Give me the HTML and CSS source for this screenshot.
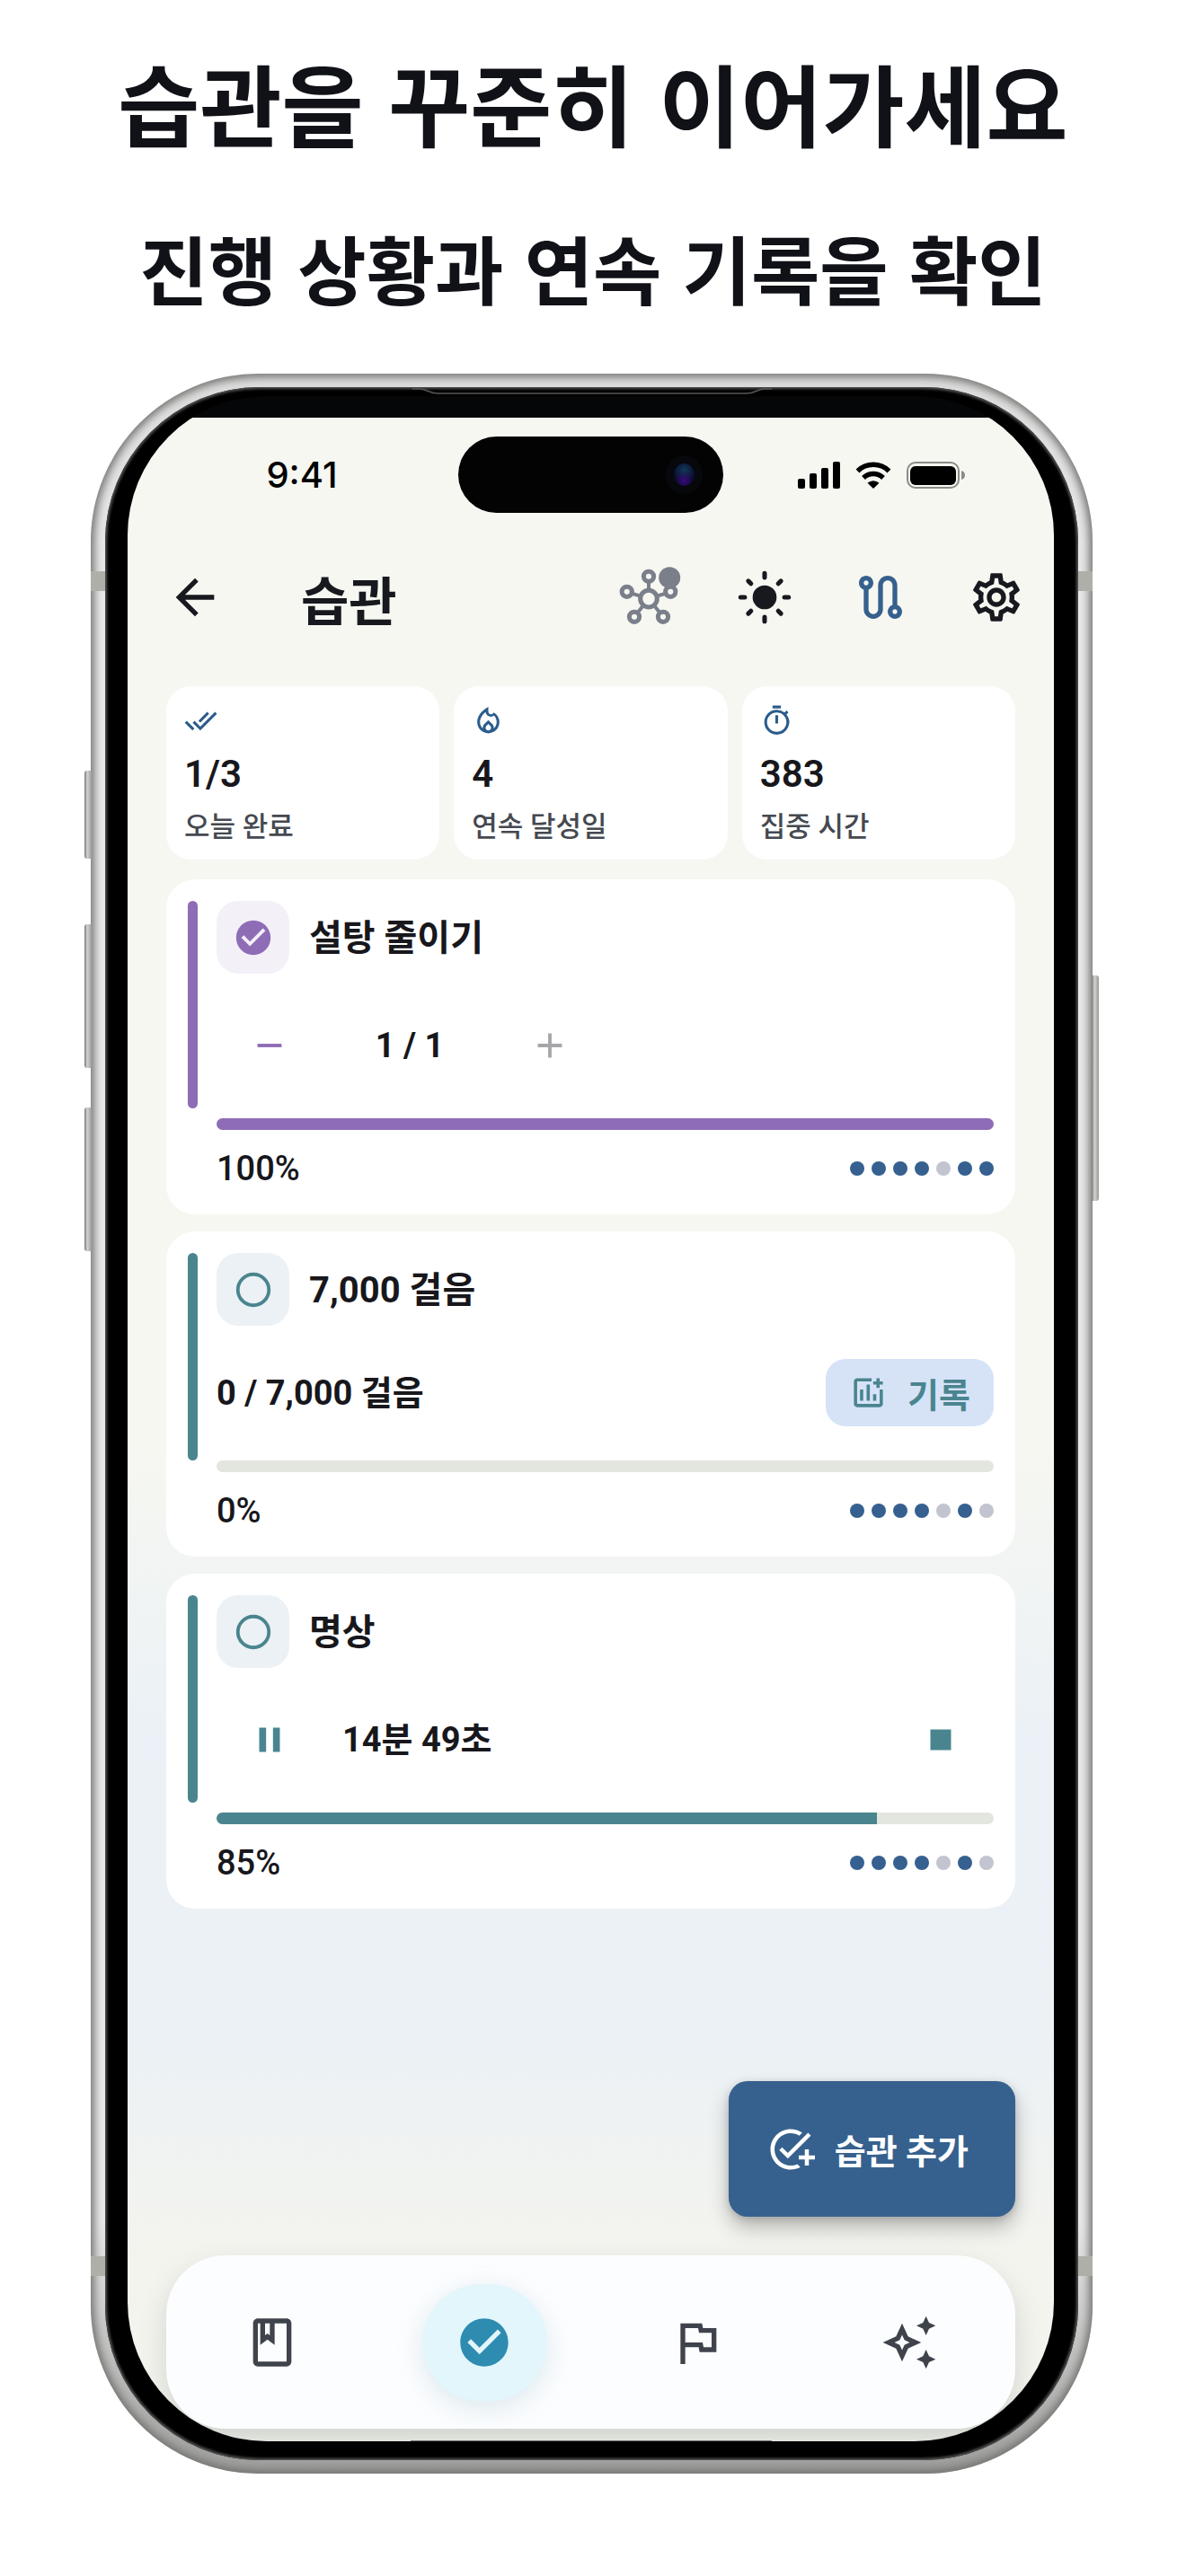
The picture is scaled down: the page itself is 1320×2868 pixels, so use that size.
FILE: index.html
```html
<!DOCTYPE html>
<html lang="ko">
<head>
    <meta charset="utf-8">
    <meta name="viewport" content="width=device-width, initial-scale=1">
    <title>습관</title>
    <link rel="stylesheet" href="styles.css">
</head>
<body>
    <header class="intro">
        <h1>습관을 꾸준히 이어가세요</h1>
        <h2>진행 상황과 연속 기록을 확인</h2>
    </header>

    <div class="phone">
        <span class="key key-action"></span>
        <span class="key key-up"></span>
        <span class="key key-down"></span>
        <span class="key key-power"></span>
        <span class="band band-top"></span>
        <span class="band band-bottom"></span>
        <div class="bezel">
            <svg class="speaker" viewBox="0 0 400 10" aria-hidden="true"><path d="M0 2h8c8 0 10 5 20 5h344c10 0 12-5 20-5h8" fill="none" stroke="#555" stroke-width="1.5"/></svg>
            <div class="glass">
                <main class="screen">
                    <div class="status">
                        <span class="time">9:41</span>
                        <div class="island"><span class="camera"></span></div>
                        <div class="status-icons">
                            <svg width="47" height="30" viewBox="0 0 47 30" aria-hidden="true"><rect x="0" y="19" width="8" height="11" rx="2"/><rect x="13" y="13" width="8" height="17" rx="2"/><rect x="26" y="7" width="8" height="23" rx="2"/><rect x="39" y="0" width="8" height="30" rx="2"/></svg>
                            <svg width="40" height="30" viewBox="0 0 40 30" aria-hidden="true"><path d="M2.500 10.500a25 25 0 0 1 35 0M9 18a16 16 0 0 1 22 0" fill="none" stroke="#000" stroke-width="5.500"/><path d="M20 30l-6.500-6.200a9.500 9.500 0 0 1 13 0z"/></svg>
                            <svg width="65" height="30" viewBox="0 0 65 30" aria-hidden="true"><rect x="1" y="1" width="57" height="28" rx="9" fill="none" stroke="#8b8c88" stroke-width="2"/><rect x="4" y="5" width="51" height="21" rx="6"/><path d="M61 10q4 1 4 5t-4 5z" fill="#8b8c88"/></svg>
                        </div>
                    </div>

                    <div class="appbar">
                        <button class="icon-btn back" aria-label="뒤로"><svg class="icon" viewBox="0 0 24 24"><path d="M20 11H7.830l5.590-5.590L12 4l-8 8 8 8 1.410-1.410L7.830 13H20v-2z"/></svg></button>
                        <h3>습관</h3>
                        <button class="icon-btn hub" aria-label="연결">
                            <svg class="icon" viewBox="0 0 24 24"><g fill="none" stroke="currentColor" stroke-width="1.900"><circle cx="12" cy="12.600" r="3.500"/><circle cx="12" cy="3.300" r="2.100"/><circle cx="2.900" cy="9.700" r="2.100"/><circle cx="21.100" cy="9.700" r="2.100"/><circle cx="6" cy="20.200" r="2.100"/><circle cx="18" cy="20.200" r="2.100"/><path stroke-width="1.500" d="M12 5.400v3.700M4.900 10.400l3.700 1.100M19.100 10.400l-3.700 1.100M7.300 18.500l2.500-3.100M16.700 18.500l-2.500-3.100"/></g><circle cx="20.700" cy="3.800" r="4.500"/></svg>
                        </button>
                        <button class="icon-btn" aria-label="밝은 테마"><svg class="icon" viewBox="0 0 24 24"><circle cx="12" cy="12" r="5"/><path fill="none" stroke="currentColor" stroke-width="1.900" stroke-linecap="round" d="M12 2v1.700M12 20.300V22M2 12h1.700M20.300 12H22M5.200 5.200l1.100 1.100M17.700 17.700l1.100 1.100M5.200 18.800l1.100-1.100M17.700 6.300l1.100-1.100"/></svg></button>
                        <button class="icon-btn route" aria-label="경로"><svg class="icon" viewBox="0 0 24 24"><path d="M19 15.180V7c0-2.210-1.790-4-4-4s-4 1.790-4 4v10c0 1.100-.9 2-2 2s-2-.9-2-2V8.820C8.160 8.400 9 7.300 9 6c0-1.660-1.340-3-3-3S3 4.340 3 6c0 1.300.84 2.400 2 2.820V17c0 2.210 1.790 4 4 4s4-1.790 4-4V7c0-1.100.9-2 2-2s2 .9 2 2v8.180A2.996 2.996 0 0 0 18 21c1.660 0 3-1.340 3-3 0-1.300-.84-2.400-2-2.820zM6 7c-.55 0-1-.45-1-1s.45-1 1-1 1 .45 1 1-.45 1-1 1zm12 12c-.55 0-1-.45-1-1s.45-1 1-1 1 .45 1 1-.45 1-1 1z"/></svg></button>
                        <button class="icon-btn" aria-label="설정"><svg class="icon" viewBox="0 0 24 24"><path d="M19.430 12.980c.04-.32.07-.64.07-.98 0-.34-.03-.66-.07-.98l2.110-1.650c.19-.15.24-.42.12-.64l-2-3.460c-.09-.16-.26-.25-.44-.25-.06 0-.12.01-.17.03l-2.490 1c-.52-.4-1.080-.73-1.690-.98l-.38-2.650C14.460 2.180 14.250 2 14 2h-4c-.25 0-.46.18-.49.42l-.38 2.650c-.61.25-1.170.59-1.690.98l-2.490-1c-.06-.02-.12-.03-.18-.03-.17 0-.34.09-.43.25l-2 3.460c-.13.22-.07.49.12.64l2.110 1.650c-.04.32-.07.65-.07.98 0 .33.03.66.07.98l-2.110 1.650c-.19.15-.24.42-.12.64l2 3.460c.09.16.26.25.44.25.06 0 .12-.01.17-.03l2.490-1c.52.4 1.080.73 1.690.98l.38 2.650c.03.24.24.42.49.42h4c.25 0 .46-.18.49-.42l.38-2.650c.61-.25 1.170-.59 1.690-.98l2.490 1c.06.02.12.03.18.03.17 0 .34-.09.43-.25l2-3.460c.12-.22.07-.49-.12-.64l-2.110-1.650zm-1.980-1.710c.04.31.05.52.05.73 0 .21-.02.43-.05.73l-.14 1.130.89.7 1.080.84-.7 1.210-1.270-.51-1.040-.42-.9.68c-.43.32-.84.56-1.250.73l-1.060.43-.16 1.130-.2 1.350h-1.400l-.19-1.350-.16-1.130-1.060-.43c-.43-.18-.83-.41-1.230-.71l-.91-.7-1.060.43-1.270.51-.7-1.210 1.080-.84.89-.7-.14-1.130c-.03-.31-.05-.54-.05-.74s.02-.43.05-.73l.14-1.130-.89-.7-1.080-.84.7-1.210 1.270.51 1.040.42.9-.68c.43-.32.84-.56 1.250-.73l1.060-.43.16-1.130.2-1.350h1.390l.19 1.350.16 1.130 1.060.43c.43.18.83.41 1.230.71l.91.7 1.060-.43 1.270-.51.7 1.210-1.070.85-.89.7.14 1.130zM12 8c-2.210 0-4 1.790-4 4s1.790 4 4 4 4-1.790 4-4-1.790-4-4-4zm0 6c-1.100 0-2-.9-2-2s.9-2 2-2 2 .9 2 2-.9 2-2 2z"/></svg></button>
                    </div>

                    <section class="stats">
                        <div class="stat">
                            <svg class="icon-sm" viewBox="0 0 24 24"><path d="M18 7l-1.410-1.410-6.340 6.340 1.410 1.410L18 7zm4.240-1.410L11.660 16.170 7.480 12l-1.410 1.410L11.660 19l12-12-1.420-1.410zM.41 13.410L6 19l1.410-1.410L1.830 12 .41 13.410z"/></svg>
                            <strong>1/3</strong>
                            <span>오늘 완료</span>
                        </div>
                        <div class="stat">
                            <svg class="icon-sm" viewBox="0 0 24 24"><path d="M16 6l-.44.55C14.380 8.020 12 7.190 12 5.300V2S4 6 4 13c0 4.420 3.580 8 8 8s8-3.580 8-8c0-2.960-1.610-5.620-4-7zm-4 13c-1.100 0-2-.87-2-1.940 0-.51.2-.99.58-1.360L12 14.300l1.430 1.400c.37.37.57.85.57 1.360 0 1.070-.9 1.940-2 1.940zm3.960-1.500c.04-.36.22-1.840-1.130-3.200L12 11.500l-2.830 2.780c-1.360 1.360-1.170 2.880-1.130 3.210A5.986 5.986 0 0 1 6 13c0-3.160 2.130-5.650 4.030-7.250A4.003 4.003 0 0 0 13.990 9c.78 0 1.540-.23 2.180-.66C17.340 9.580 18 11.260 18 13c0 1.810-.82 3.400-2.040 4.500z"/></svg>
                            <strong>4</strong>
                            <span>연속 달성일</span>
                        </div>
                        <div class="stat">
                            <svg class="icon-sm" viewBox="0 0 24 24"><path d="M9 1h6v2H9zM19.030 7.390l1.420-1.420c-.43-.51-.9-.99-1.410-1.410l-1.420 1.420A8.962 8.962 0 0 0 12 4c-4.970 0-9 4.030-9 9s4.020 9 9 9a8.994 8.994 0 0 0 7.030-14.610zM12 20c-3.870 0-7-3.130-7-7s3.130-7 7-7 7 3.130 7 7-3.130 7-7 7zM11 8h2v6h-2z"/></svg>
                            <strong>383</strong>
                            <span>집중 시간</span>
                        </div>
                    </section>

                    <section class="habits">
                        <article class="habit purple">
                            <span class="accent"></span>
                            <div class="habit-body">
                                <div class="habit-head">
                                    <button class="check" aria-label="완료됨"><svg class="icon-md" viewBox="0 0 24 24"><path d="M12 2C6.480 2 2 6.480 2 12s4.480 10 10 10 10-4.480 10-10S17.520 2 12 2zm-2 15l-5-5 1.410-1.410L10 14.170l7.590-7.590L19 8l-9 9z"/></svg></button>
                                    <h4>설탕 줄이기</h4>
                                </div>
                                <div class="control">
                                    <button class="step" aria-label="빼기"><svg class="icon-md" viewBox="0 0 24 24"><path d="M5 11h14v2H5z"/></svg></button>
                                    <span class="value counter">1 / 1</span>
                                    <button class="step" aria-label="더하기" disabled><svg class="icon-md" viewBox="0 0 24 24"><path d="M19 13h-6v6h-2v-6H5v-2h6V5h2v6h6z"/></svg></button>
                                </div>
                                <div class="bar"><div class="fill" style="width: 100%"></div></div>
                                <div class="habit-foot">
                                    <span>100%</span>
                                    <div class="dots"><i class="on"></i><i class="on"></i><i class="on"></i><i class="on"></i><i></i><i class="on"></i><i class="on"></i></div>
                                </div>
                            </div>
                        </article>

                        <article class="habit teal">
                            <span class="accent"></span>
                            <div class="habit-body">
                                <div class="habit-head">
                                    <button class="check" aria-label="완료 표시"><svg class="icon-md" viewBox="0 0 24 24"><circle cx="12" cy="12" r="9" fill="none" stroke="currentColor" stroke-width="2"/></svg></button>
                                    <h4>7,000 걸음</h4>
                                </div>
                                <div class="control record-row">
                                    <span class="value">0 / 7,000 걸음</span>
                                    <button class="record">
                                        <svg width="43" height="43" viewBox="0 0 24 24"><path d="M14 3H5c-1.100 0-2 .9-2 2v14c0 1.100.9 2 2 2h14c1.100 0 2-.9 2-2v-9h-2v9H5V5h9zM6.800 10h2v7h-2zM10.900 7h2v10h-2zM14.900 13h2v4h-2zM17 3h2v2h2v2h-2v2h-2V7h-2V5h2z"/></svg>
                                        기록
                                    </button>
                                </div>
                                <div class="bar"><div class="fill" style="width: 0%"></div></div>
                                <div class="habit-foot">
                                    <span>0%</span>
                                    <div class="dots"><i class="on"></i><i class="on"></i><i class="on"></i><i class="on"></i><i></i><i class="on"></i><i></i></div>
                                </div>
                            </div>
                        </article>

                        <article class="habit teal">
                            <span class="accent"></span>
                            <div class="habit-body">
                                <div class="habit-head">
                                    <button class="check" aria-label="완료 표시"><svg class="icon-md" viewBox="0 0 24 24"><circle cx="12" cy="12" r="9" fill="none" stroke="currentColor" stroke-width="2"/></svg></button>
                                    <h4>명상</h4>
                                </div>
                                <div class="control">
                                    <button class="step" aria-label="일시정지"><svg class="icon-md" viewBox="0 0 24 24"><path d="M6 5h4v14H6zM14 5h4v14h-4z"/></svg></button>
                                    <span class="value timer">14분 49초</span>
                                    <button class="step" aria-label="정지"><svg class="icon-md" viewBox="0 0 24 24"><path d="M6 6h12v12H6z"/></svg></button>
                                </div>
                                <div class="bar"><div class="fill" style="width: 85%"></div></div>
                                <div class="habit-foot">
                                    <span>85%</span>
                                    <div class="dots"><i class="on"></i><i class="on"></i><i class="on"></i><i class="on"></i><i></i><i class="on"></i><i></i></div>
                                </div>
                            </div>
                        </article>
                    </section>

                    <button class="add">
                        <svg width="54" height="54" viewBox="0 0 24 24"><path d="M22 5.180L10.590 16.600l-4.240-4.240 1.410-1.410 2.830 2.830 10-10L22 5.180zM12 20c-4.410 0-8-3.590-8-8s3.590-8 8-8c1.570 0 3.040.46 4.280 1.250l1.450-1.450A10.020 10.020 0 0 0 12 2C6.480 2 2 6.480 2 12s4.480 10 10 10c1.730 0 3.360-.44 4.780-1.220l-1.500-1.500c-1 .46-2.110.72-3.280.72zm7-5h-3v2h3v3h2v-3h3v-2h-3v-3h-2v3z"/></svg>
                        습관 추가
                    </button>

                    <nav class="tabs">
                        <a href="#journal" aria-label="기록장"><svg class="icon" viewBox="0 0 24 24"><path d="M18 2H6c-1.100 0-2 .9-2 2v16c0 1.100.9 2 2 2h12c1.100 0 2-.9 2-2V4c0-1.100-.9-2-2-2zM9 4h2v5l-1-.75L9 9V4zm9 16H6V4h1v9l3-2.250L13 13V4h5v16z"/></svg></a>
                        <a href="#habits" aria-label="습관" class="active"><svg class="icon" viewBox="0 0 24 24"><path d="M12 2C6.480 2 2 6.480 2 12s4.480 10 10 10 10-4.480 10-10S17.520 2 12 2zm-2 15l-5-5 1.410-1.410L10 14.170l7.590-7.590L19 8l-9 9z"/></svg></a>
                        <a href="#goals" aria-label="목표"><svg class="icon" viewBox="0 0 24 24"><path d="M12.360 6l.4 2H18v6h-3.360l-.4-2H7V6h5.360M14 4H5v17h2v-7h5.600l.4 2h7V6h-5.600L14 4z"/></svg></a>
                        <a href="#insights" aria-label="인사이트"><svg class="icon" viewBox="0 0 24 24"><path d="M19 9l1.250-2.750L23 5l-2.750-1.250L19 1l-1.250 2.750L15 5l2.750 1.250zm0 6l-1.250 2.750L15 19l2.750 1.250L19 23l1.250-2.750L23 19l-2.750-1.250zM11.500 9.500L9 4 6.500 9.500 1 12l5.500 2.500L9 20l2.500-5.500L17 12l-5.500-2.500zm-1.510 3.490L9 15.170l-.99-2.180L5.830 12l2.180-.99L9 8.830l.99 2.180 2.180.99-2.180.99z"/></svg></a>
                    </nav>
                    <div class="home-line"></div>
                </main>
            </div>
        </div>
    </div>
</body>
</html>
```
FILE: styles.css
```css
* {
    box-sizing: border-box;
}

body {
    margin: 0;
    background: #fff;
    color: #17171c;
    font-family: Roboto, "Noto Sans CJK KR", sans-serif;
}

h1, h2, h3, h4 {
    margin: 0;
    font-weight: 700;
}

button {
    padding: 0;
    border: none;
    background: none;
    color: inherit;
    font: inherit;
    cursor: pointer;
}

svg {
    display: block;
    flex: none;
    fill: currentColor;
}

/* headline */
.intro {
    padding: 53px 20px 69px;
    color: #101218;
    text-align: center;
    font-family: "Noto Sans CJK KR", sans-serif;
}

.intro h1 {
    font-size: 99px;
    line-height: 120px;
}

.intro h2 {
    margin-top: 74px;
    font-size: 83px;
    line-height: 100px;
}

/* device */
.phone {
    position: relative;
    margin: 0 104px 113px 101px;
    padding: 15px 16px;
    border-radius: 187px;
    background: linear-gradient(#dcdcdc, #e8e8e8 10%, #e8e8e8 88%, #9c9c9a);
    box-shadow: inset 0 0 10px 4px #757573;
}

.key {
    position: absolute;
    left: -7px;
    width: 8px;
    border-radius: 3px 0 0 3px;
    background: linear-gradient(90deg, #777, #d4d4d2 40%, #999);
}

.key-action {
    top: 442px;
    height: 98px;
}

.key-up {
    top: 613px;
    height: 160px;
}

.key-down {
    top: 817px;
    height: 160px;
}

.key-power {
    top: 670px;
    left: auto;
    right: -7px;
    height: 251px;
    border-radius: 0 3px 3px 0;
}

/* antenna lines */
.band {
    position: absolute;
    left: 0;
    right: 0;
    height: 22px;
    background: #aeafa8;
}

.band-top {
    top: 220px;
}

.band-bottom {
    bottom: 220px;
}

.bezel {
    position: relative;
    padding: 10px 27px 21px 25px;
    border-radius: 172px;
    background: #000;
    box-shadow: inset 0 0 3px 2px #555;
}

.speaker {
    position: absolute;
    top: 0;
    left: 50%;
    width: 400px;
    height: 10px;
    margin-left: -200px;
}

.glass {
    padding-top: 24px;
    overflow: hidden;
    border-radius: 155px;
    background: #050608;
}

.screen {
    display: flex;
    flex-direction: column;
    padding: 0 43px;
    background: linear-gradient(#f6f7f1, #f6f7f1 51%, #ebf1f6 65%, #ebf1f5 80%, #f4f4ee 91%);
}

/* status bar */
.status {
    display: grid;
    grid-template-columns: 1fr 295px 1fr;
    align-items: center;
    margin: 0 -43px;
    padding-top: 21px;
    color: #000;
}

.time {
    padding-left: 20px;
    text-align: center;
    font: 500 40px/44px Inter, sans-serif;
}

.island {
    display: flex;
    align-items: center;
    justify-content: flex-end;
    height: 85px;
    padding-right: 32px;
    border-radius: 43px;
    background: #030303;
}

.camera {
    width: 23px;
    height: 25px;
    border-radius: 50%;
    background: radial-gradient(circle at 50% 75%, #3a0a78, transparent 45%), radial-gradient(circle at 50% 30%, #123a58, #0b0b30 60%);
    box-shadow: 0 0 0 9px #07080c;
}

.status-icons {
    display: flex;
    justify-content: center;
    gap: 17px;
    padding-right: 16px;
}

/* app bar */
.appbar {
    display: flex;
    align-items: center;
    height: 129px;
    margin: 29px -43px 35px;
    color: #17191f;
}

.appbar h3 {
    flex: 1;
    padding-top: 12px;
    font-size: 58px;
    line-height: 80px;
}

.icon-btn {
    display: flex;
    align-items: center;
    justify-content: center;
    width: 129px;
    height: 129px;
}

.back {
    width: 150px;
    margin-right: 43px;
}

.hub {
    color: #7a7f8a;
}

.hub svg {
    overflow: visible;
}

.route {
    color: #36618e;
}

.icon {
    width: 64px;
    height: 64px;
}

.icon-md {
    width: 46px;
    height: 46px;
}

.icon-sm {
    width: 37px;
    height: 37px;
    color: #2c5c8d;
}

/* summary */
.stats {
    display: grid;
    grid-template-columns: repeat(3, 1fr);
    gap: 16px;
}

.stat {
    display: flex;
    flex-direction: column;
    padding: 20px 20px 16px;
    border-radius: 28px;
    background: #fff;
}

.stat strong {
    margin: 16px 0 14px;
    font-size: 42px;
    font-weight: 600;
    line-height: 50px;
}

.stat span {
    color: #454950;
    font-size: 31px;
    font-weight: 500;
    line-height: 40px;
}

/* habit cards */
.habits {
    display: grid;
    gap: 19px;
    margin-top: 22px;
}

.habit {
    display: flex;
    gap: 21px;
    padding: 24px 24px 26px;
    border-radius: 32px;
    background: #fff;
}

.purple {
    color: #8e6cb6;
}

.teal {
    color: #4a858f;
}

.accent {
    width: 11px;
    height: 231px;
    border-radius: 6px;
    background: currentColor;
}

.habit-body {
    flex: 1;
}

.habit-head {
    display: flex;
    align-items: center;
    gap: 22px;
}

.habit-head h4 {
    padding-top: 2px;
    color: #17171c;
    font-size: 40px;
    line-height: 56px;
}

.check {
    display: flex;
    align-items: center;
    justify-content: center;
    width: 81px;
    height: 81px;
    border-radius: 24px;
    background: #ecf1f5;
}

.purple .check {
    background: #f3f0f8;
}

.control {
    display: flex;
    align-items: center;
    height: 118px;
    margin: 21px 0 22px;
}

.record-row {
    justify-content: space-between;
    height: 107px;
}

.step {
    display: flex;
    align-items: center;
    justify-content: center;
    width: 118px;
    height: 118px;
}

.step:disabled {
    color: #a6a6aa;
}

.value {
    color: #17171c;
    font-size: 38px;
    font-weight: 700;
    line-height: 50px;
}

.counter {
    width: 194px;
    text-align: center;
}

.timer {
    flex: 1;
    padding-left: 22px;
}

.record {
    display: flex;
    align-items: center;
    gap: 22px;
    height: 75px;
    padding: 0 26px;
    border-radius: 22px;
    background: #d6e3f7;
    font-size: 38px;
    font-weight: 700;
}

.bar {
    height: 13px;
    overflow: hidden;
    border-radius: 7px;
    background: #e3e6de;
}

.fill {
    height: 100%;
    background: currentColor;
}

.habit-foot {
    display: flex;
    align-items: center;
    justify-content: space-between;
    margin-top: 18px;
    color: #17171c;
    font-size: 38px;
    font-weight: 500;
    line-height: 50px;
}

.dots {
    display: flex;
    gap: 8px;
}

.dots i {
    width: 16px;
    height: 16px;
    border-radius: 50%;
    background: #c2c5cf;
}

.dots .on {
    background: #35608f;
}

/* add button */
.add {
    display: flex;
    align-items: center;
    align-self: flex-end;
    gap: 22px;
    height: 151px;
    margin: 192px 0 43px;
    padding: 0 52px 0 42px;
    border-radius: 21px;
    background: #36618e;
    box-shadow: 0 12px 22px rgba(0, 0, 0, 0.25), 0 2px 8px rgba(0, 0, 0, 0.15);
    color: #fff;
    font-size: 38px;
    font-weight: 600;
}

/* bottom tabs */
.tabs {
    display: grid;
    grid-template-columns: repeat(4, 1fr);
    align-items: center;
    justify-items: center;
    height: 193px;
    border-radius: 66px;
    background: #fcfdfe;
    box-shadow: 0 14px 30px rgba(80, 100, 90, 0.22);
}

.tabs a {
    display: flex;
    align-items: center;
    justify-content: center;
    width: 139px;
    height: 130px;
    border-radius: 65px;
    color: #3f434b;
}

.tabs .active {
    background: #e3f6fb;
    box-shadow: 0 8px 30px rgba(90, 150, 180, 0.2);
    color: #2e8cb0;
}

.home-line {
    align-self: center;
    width: 402px;
    height: 1px;
    margin-top: 13px;
    background: #777;
}
```
